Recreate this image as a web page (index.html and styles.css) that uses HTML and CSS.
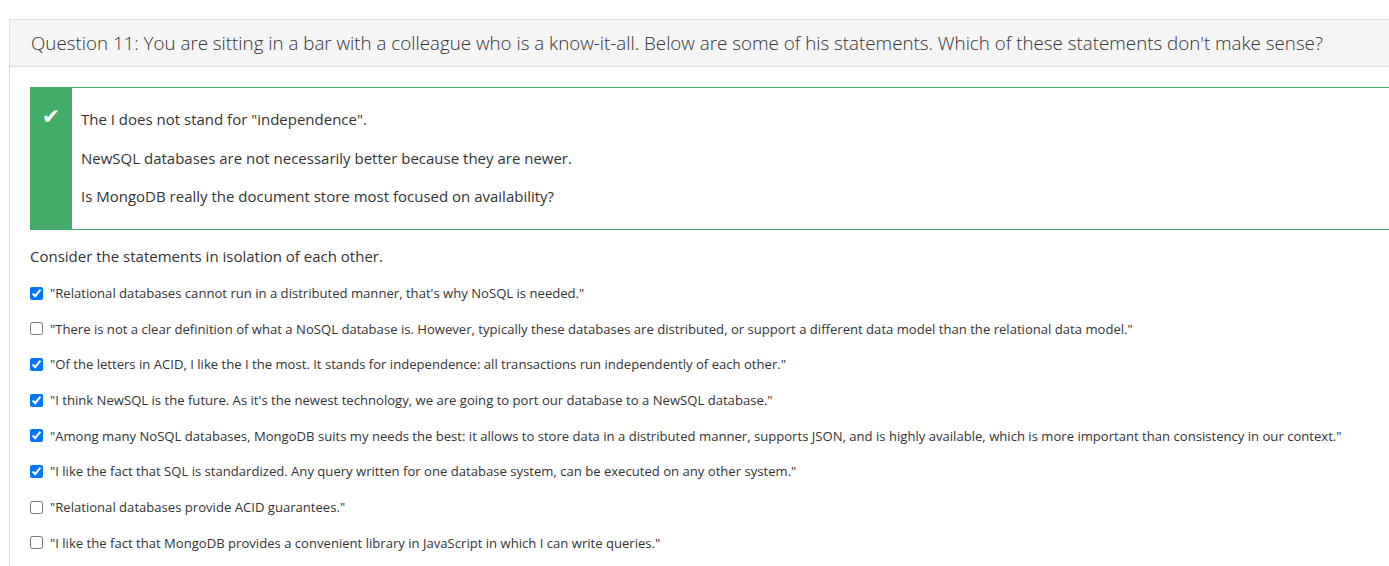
FILE: index.html
```html
<!DOCTYPE html>
<html>
<head>
<meta charset="utf-8">
<link rel="stylesheet" href="styles.css">
</head>
<body>
<div class="panel">
  <div class="panel-heading">Question 11: You are sitting in a bar with a colleague who is a know-it-all. Below are some of his statements. Which of these statements don't make sense?</div>
  <div class="panel-body">
    <div class="feedback">
      <div class="feedback-icon">&#10004;</div>
      <div class="feedback-text">
        <p>The I does not stand for "independence".</p>
        <p>NewSQL databases are not necessarily better because they are newer.</p>
        <p>Is MongoDB really the document store most focused on availability?</p>
      </div>
    </div>
    <p class="hint">Consider the statements in isolation of each other.</p>
    <div class="options">
      <label class="option"><input type="checkbox" checked><span>"Relational databases cannot run in a distributed manner, that's why NoSQL is needed."</span></label>
      <label class="option"><input type="checkbox"><span>"There is not a clear definition of what a NoSQL database is. However, typically these databases are distributed, or support a different data model than the relational data model."</span></label>
      <label class="option"><input type="checkbox" checked><span>"Of the letters in ACID, I like the I the most. It stands for independence: all transactions run independently of each other."</span></label>
      <label class="option"><input type="checkbox" checked><span>"I think NewSQL is the future. As it's the newest technology, we are going to port our database to a NewSQL database."</span></label>
      <label class="option"><input type="checkbox" checked><span>"Among many NoSQL databases, MongoDB suits my needs the best: it allows to store data in a distributed manner, supports JSON, and is highly available, which is more important than consistency in our context."</span></label>
      <label class="option"><input type="checkbox" checked><span>"I like the fact that SQL is standardized. Any query written for one database system, can be executed on any other system."</span></label>
      <label class="option"><input type="checkbox"><span>"Relational databases provide ACID guarantees."</span></label>
      <label class="option"><input type="checkbox"><span>"I like the fact that MongoDB provides a convenient library in JavaScript in which I can write queries."</span></label>
    </div>
  </div>
</div>
</body>
</html>
```

FILE: styles.css
```css
html, body {
  margin: 0;
  padding: 0;
  background: #fff;
}
body {
  font-family: "Open Sans", "Noto Sans", sans-serif;
  color: #333;
  height: 566px;
  overflow: hidden;
}
.panel {
  margin: 19px 0 0 9px;
  width: 1420px;
  border-top: 1px solid #ddd;
  border-left: 1px solid #ddd;
  padding-bottom: 40px;
}
.panel-heading {
  background: #f5f5f5;
  border-bottom: 1px solid #ddd;
  height: 46px;
  line-height: 46px;
  padding-left: 21px;
  font-size: 18.75px;
  font-weight: 300;
  white-space: nowrap;
}
.panel-body {
  padding: 20px 0 0 20px;
}
.feedback {
  display: flex;
  border-top: 1px solid #43ac6a;
  border-bottom: 1px solid #43ac6a;
}
.feedback-icon {
  width: 42px;
  flex: none;
  background: #43ac6a;
  color: #fff;
  font-family: "DejaVu Sans", sans-serif;
  font-size: 22px;
  font-weight: bold;
  text-align: center;
  padding-top: 17px;
  line-height: 24px;
  box-sizing: border-box;
}
.feedback-text {
  padding: 21px 9px 22px 9px;
  font-size: 15px;
}
.feedback-text p {
  margin: 0 0 17.5px 0;
  line-height: 21px;
}
.feedback-text p:last-child {
  margin-bottom: 0;
}
.hint {
  margin: 16px 0 16px 0;
  font-size: 15px;
  line-height: 21px;
}
.options {
  display: flex;
  flex-direction: column;
  gap: 17.7px;
  padding-top: 1px;
}
.option {
  display: flex;
  align-items: center;
  font-size: 13.1px;
  line-height: 18px;
  white-space: nowrap;
}
.option input {
  margin: 0 7px 0 0;
  width: 13px;
  height: 13px;
}
```
